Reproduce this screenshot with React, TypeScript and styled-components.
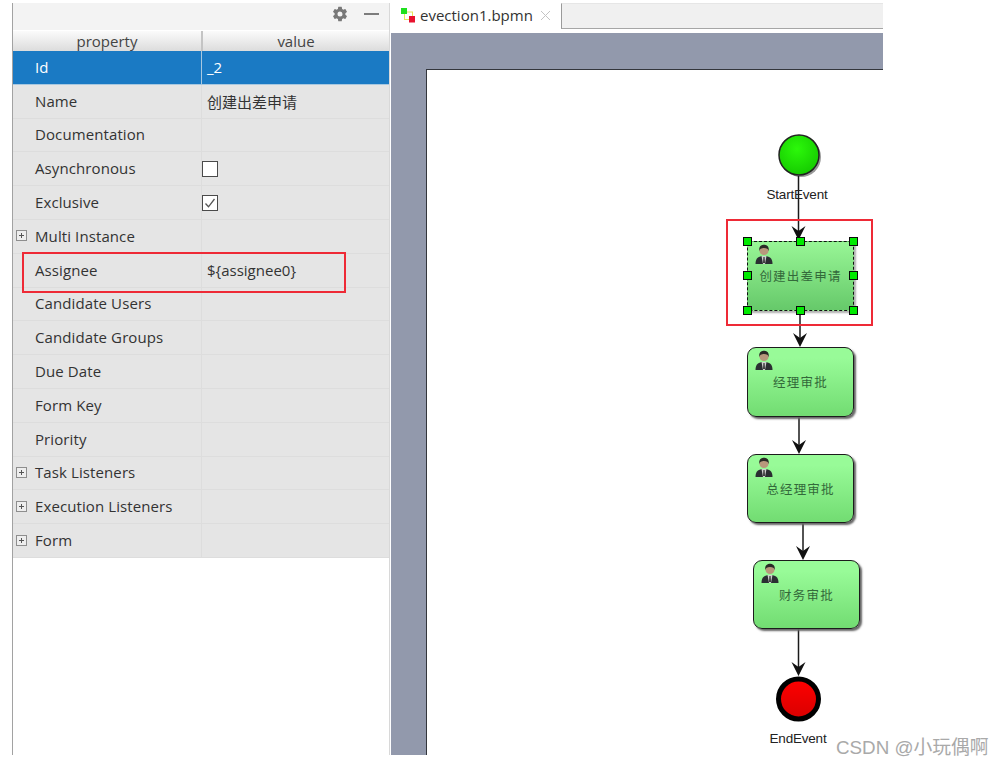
import React from "react";
import styled, { createGlobalStyle } from "styled-components";
import { IoSettingsSharp } from "react-icons/io5";

const Global = createGlobalStyle`
  html, body { margin: 0; padding: 0; background: #fff; }
  body { font-family: "Open Sans", "Noto Sans", "Noto Sans CJK SC", sans-serif; }
`;

const Shell = styled.div`
  position: relative;
  width: 1003px;
  height: 765px;
  box-sizing: border-box;
  padding: 3px 120px 10px 12px;
  display: flex;
  overflow: hidden;
  background: #fff;
`;

const Panel = styled.section`
  width: 378px;
  flex: none;
  display: flex;
  flex-direction: column;
  box-sizing: border-box;
  border-left: 1px solid #a2a2a2;
  border-right: 1px solid #d8d8d8;
`;

const PanelBar = styled.div`
  height: 27px;
  flex: none;
  background: #f3f3f3;
  display: flex;
  align-items: center;
  justify-content: flex-end;
  gap: 16px;
  padding: 0 10px 5px 0;
  box-sizing: border-box;
  color: #787878;
`;

const MinusIcon = styled.span`
  width: 15px;
  height: 2px;
  background: #7c7c7c;
`;

const HeaderRow = styled.div`
  height: 21px;
  flex: none;
  display: grid;
  grid-template-columns: 188px 1fr;
  background: linear-gradient(#fbfbfb, #dcdcdc);
  border-top: 1px solid #fff;
  box-sizing: border-box;
`;

const HeaderCell = styled.div`
  font-size: 15px;
  line-height: 21px;
  text-align: center;
  color: #444;
  & + & { border-left: 2px solid #c4c4c4; }
`;

const Row = styled.div<{ $selected?: boolean }>`
  height: 33.8px;
  flex: none;
  display: grid;
  grid-template-columns: 188px 1fr;
  box-sizing: border-box;
  background: ${(p) => (p.$selected ? "#1a7ac4" : "#e5e5e5")};
  color: ${(p) => (p.$selected ? "#fff" : "#333")};
  border-bottom: 1px solid ${(p) => (p.$selected ? "#a8c8e0" : "#dddddd")};
`;

const NameCell = styled.div`
  display: flex;
  align-items: center;
  font-size: 15px;
  letter-spacing: 0.1px;
  padding: 0 0 1px 3px;
  box-sizing: border-box;
  white-space: nowrap;
`;

const ExpanderSlot = styled.span`
  width: 19px;
  flex: none;
  display: flex;
`;

const Expander = styled.span`
  position: relative;
  width: 11px;
  height: 11px;
  box-sizing: border-box;
  border: 1px solid #8e8e8e;
  background: #eee;
  &::before {
    content: "";
    position: absolute;
    left: 2px;
    top: 4px;
    width: 5px;
    height: 1px;
    background: #555;
  }
  &::after {
    content: "";
    position: absolute;
    left: 4px;
    top: 2px;
    width: 1px;
    height: 5px;
    background: #555;
  }
`;

const ValueCell = styled.div<{ $selected?: boolean }>`
  display: flex;
  align-items: center;
  font-size: 15px;
  padding-left: 5px;
  box-sizing: border-box;
  border-left: 1px solid ${(p) => (p.$selected ? "#a8c8e0" : "#dddddd")};
  white-space: nowrap;
`;

const CheckBox = styled.span`
  width: 16px;
  height: 16px;
  margin-left: -5px;
  box-sizing: border-box;
  border: 1px solid #4a4a4a;
  background: #fff;
  display: flex;
  align-items: center;
  justify-content: center;
`;

const Editor = styled.section`
  flex: 1;
  min-width: 0;
  display: flex;
  flex-direction: column;
  margin-left: 1px;
`;

const TabBar = styled.div`
  height: 30px;
  flex: none;
  display: flex;
  background: #fff;
`;

const Tab = styled.div`
  width: 170px;
  flex: none;
  display: flex;
  align-items: center;
  box-sizing: border-box;
  padding: 0 0 6px 10px;
  font-size: 15px;
  color: #333;
  background: #fff;
`;

const TabIcon = styled.svg`
  flex: none;
  margin-right: 4px;
`;

const TabClose = styled.svg`
  flex: none;
  margin-left: 7px;
`;

const TabFill = styled.div`
  flex: 1;
  height: 26px;
  background: #f0f0f0;
  border-left: 1px solid #9a9a9a;
  border-bottom: 1px solid #a6a6a6;
  border-top: 1px solid #e6e6e6;
  box-sizing: border-box;
`;

const Canvas = styled.div`
  flex: 1;
  background: #9299ac;
  padding: 36px 0 0 35px;
  display: flex;
  min-height: 0;
`;

const Paper = styled.div`
  position: relative;
  flex: 1;
  background: #fff;
  box-shadow: inset 1px 1px 0 #33363c;
`;

const Wires = styled.svg`
  position: absolute;
  left: 0;
  top: 0;
`;

const Task = styled.div<{ $x: number; $y: number; $h: number; $selected?: boolean }>`
  position: absolute;
  left: ${(p) => p.$x}px;
  top: ${(p) => p.$y}px;
  width: 107px;
  height: ${(p) => p.$h}px;
  box-sizing: border-box;
  display: flex;
  align-items: center;
  justify-content: center;
  padding-bottom: 1px;
  font-family: "Noto Sans CJK SC", sans-serif;
  font-size: 12.5px;
  letter-spacing: 1.2px;
  color: #33693a;
  background: ${(p) =>
    p.$selected
      ? "linear-gradient(#98f696, #66c96a)"
      : "linear-gradient(#98fb98 15%, #72dc72)"};
  border: ${(p) => (p.$selected ? "1.5px dashed #111" : "1.5px solid #1c1c1c")};
  border-radius: ${(p) => (p.$selected ? "2px" : "9px")};
  box-shadow: 2px 2px 2px ${(p) => (p.$selected ? "#b0b0b0" : "#666")};
`;

const Person = styled.svg`
  position: absolute;
  left: 7px;
  top: 2px;
`;

const Handle = styled.span<{ $x: number; $y: number }>`
  position: absolute;
  left: ${(p) => p.$x}px;
  top: ${(p) => p.$y}px;
  width: 9px;
  height: 9px;
  background: #00ea00;
  border: 1px solid #0a0a0a;
  box-sizing: border-box;
`;

const EventLabel = styled.span<{ $x: number; $y: number }>`
  position: absolute;
  left: ${(p) => p.$x}px;
  top: ${(p) => p.$y}px;
  transform: translateX(-50%);
  font-family: "Liberation Sans", sans-serif;
  font-size: 13.5px;
  line-height: 16px;
  letter-spacing: -0.2px;
  color: #222;
  white-space: nowrap;
`;

const RedBox = styled.div<{ $x: number; $y: number; $w: number; $h: number }>`
  position: absolute;
  left: ${(p) => p.$x}px;
  top: ${(p) => p.$y}px;
  width: ${(p) => p.$w}px;
  height: ${(p) => p.$h}px;
  box-sizing: border-box;
  border: 2px solid #ee2a36;
  pointer-events: none;
`;

const Watermark = styled.span`
  position: absolute;
  left: 836px;
  top: 736px;
  font-family: "Liberation Sans", "Noto Sans CJK SC", sans-serif;
  font-size: 18.8px;
  line-height: 24px;
  color: #a9a9a9;
  white-space: nowrap;
`;

type RowData = { name: string; value?: string; expand?: boolean; check?: boolean; selected?: boolean };

const rows: RowData[] = [
  { name: "Id", value: "_2", selected: true },
  { name: "Name", value: "创建出差申请" },
  { name: "Documentation" },
  { name: "Asynchronous", check: false },
  { name: "Exclusive", check: true },
  { name: "Multi Instance", expand: true },
  { name: "Assignee", value: "${assignee0}" },
  { name: "Candidate Users" },
  { name: "Candidate Groups" },
  { name: "Due Date" },
  { name: "Form Key" },
  { name: "Priority" },
  { name: "Task Listeners", expand: true },
  { name: "Execution Listeners", expand: true },
  { name: "Form", expand: true },
];

const PersonIcon = () => (
  <Person width="18" height="20" viewBox="0 0 18 20">
    <path d="M0.500 20c0-6 3-8 8.500-8s8.500 2 8.500 8z" fill="#2b2e32" />
    <path d="M6.500 12h5l-1.500 8H8z" fill="#cfcfcf" />
    <path d="M8.400 13h1.200l.4 6H8z" fill="#3c3c3c" />
    <circle cx="9" cy="6.500" r="4.600" fill="#b8987c" />
    <path d="M4.300 7C3.600 2 6.800.8 9 .8s5.400 1.200 4.700 6.200c-.6-2.200-1.800-2.900-4.700-2.900S4.900 4.800 4.300 7z" fill="#2a2a26" />
  </Person>
);

const Arrow = ({ x, y }: { x: number; y: number }) => (
  <path d={`M${x} ${y}L${x - 7} ${y - 14}L${x} ${y - 9}L${x + 7} ${y - 14}Z`} fill="#111" />
);

const Wire = ({ x, y1, y2 }: { x: number; y1: number; y2: number }) => (
  <>
    <line x1={x} x2={x} y1={y1} y2={y2 - 6} stroke="#1a1a1a" strokeWidth="1.500" />
    <Arrow x={x} y={y2} />
  </>
);

const handlePositions: [number, number][] = [
  [-5.5, -5], [47.5, -5], [100.5, -5],
  [-5.5, 29], [100.5, 29],
  [-5.5, 64], [47.5, 64], [100.5, 64],
];

export default function App() {
  return (
    <>
      <Global />
      <Shell>
        <Panel>
          <PanelBar>
            <IoSettingsSharp size={16} />
            <MinusIcon />
          </PanelBar>
          <HeaderRow>
            <HeaderCell>property</HeaderCell>
            <HeaderCell>value</HeaderCell>
          </HeaderRow>
          {rows.map((r) => (
            <Row key={r.name} $selected={r.selected}>
              <NameCell>
                <ExpanderSlot>{r.expand && <Expander />}</ExpanderSlot>
                {r.name}
              </NameCell>
              <ValueCell $selected={r.selected}>
                {r.value}
                {r.check !== undefined && (
                  <CheckBox>
                    {r.check && (
                      <svg width="12" height="12" viewBox="0 0 12 12">
                        <path d="M1.500 6.500L4.500 9.800L10.500 2" fill="none" stroke="#555" strokeWidth="1.300" />
                      </svg>
                    )}
                  </CheckBox>
                )}
              </ValueCell>
            </Row>
          ))}
        </Panel>
        <Editor>
          <TabBar>
            <Tab>
              <TabIcon width="15" height="15" viewBox="0 0 15 15">
                <rect x="3.500" y="4" width="8" height="7.500" fill="none" stroke="#e6e65a" strokeWidth="1" />
                <rect x="0" y="0" width="6" height="6" fill="#1fe01f" />
                <rect x="8" y="8" width="6" height="6.500" fill="#e8122e" />
              </TabIcon>
              evection1.bpmn
              <TabClose width="11" height="11" viewBox="0 0 11 11">
                <path d="M1 1L10 10M10 1L1 10" stroke="#c4c4c4" strokeWidth="1" />
              </TabClose>
            </Tab>
            <TabFill />
          </TabBar>
          <Canvas>
            <Paper>
              <Wires width="457" height="686" viewBox="0 0 457 686">
                <defs>
                  <radialGradient id="startFill" cx="45%" cy="35%" r="70%">
                    <stop offset="0%" stopColor="#2cf80a" />
                    <stop offset="100%" stopColor="#14c800" />
                  </radialGradient>
                  <linearGradient id="endFill" x1="0" y1="0" x2="0" y2="1">
                    <stop offset="0%" stopColor="#ff0000" />
                    <stop offset="100%" stopColor="#d80000" />
                  </linearGradient>
                </defs>
                <circle cx="375" cy="88" r="20" fill="#999" />
                <circle cx="373" cy="86" r="20" fill="url(#startFill)" stroke="#222" strokeWidth="1.500" />
                <Wire x={372.5} y1={107} y2={171} />
                <Wire x={374} y1={242} y2={278} />
                <Wire x={373} y1={347} y2={385} />
                <Wire x={377} y1={454} y2={491} />
                <Wire x={372.5} y1={560} y2={607} />
                <circle cx="372.500" cy="630" r="20" fill="url(#endFill)" stroke="#000" strokeWidth="5" />
              </Wires>
              <EventLabel $x={371} $y={118}>StartEvent</EventLabel>
              <Task $x={321} $y={172} $h={70} $selected>
                <PersonIcon />
                创建出差申请
                {handlePositions.map(([x, y]) => (
                  <Handle key={`${x}-${y}`} $x={x} $y={y} />
                ))}
              </Task>
              <Task $x={321} $y={278} $h={70}>
                <PersonIcon />
                经理审批
              </Task>
              <Task $x={321} $y={385} $h={69}>
                <PersonIcon />
                总经理审批
              </Task>
              <Task $x={327} $y={491} $h={69}>
                <PersonIcon />
                财务审批
              </Task>
              <EventLabel $x={372} $y={662}>EndEvent</EventLabel>
              <RedBox $x={300} $y={150} $w={147} $h={107} />
            </Paper>
          </Canvas>
        </Editor>
        <RedBox $x={22} $y={252} $w={324} $h={41} />
        <Watermark>CSDN @小玩偶啊</Watermark>
      </Shell>
    </>
  );
}
